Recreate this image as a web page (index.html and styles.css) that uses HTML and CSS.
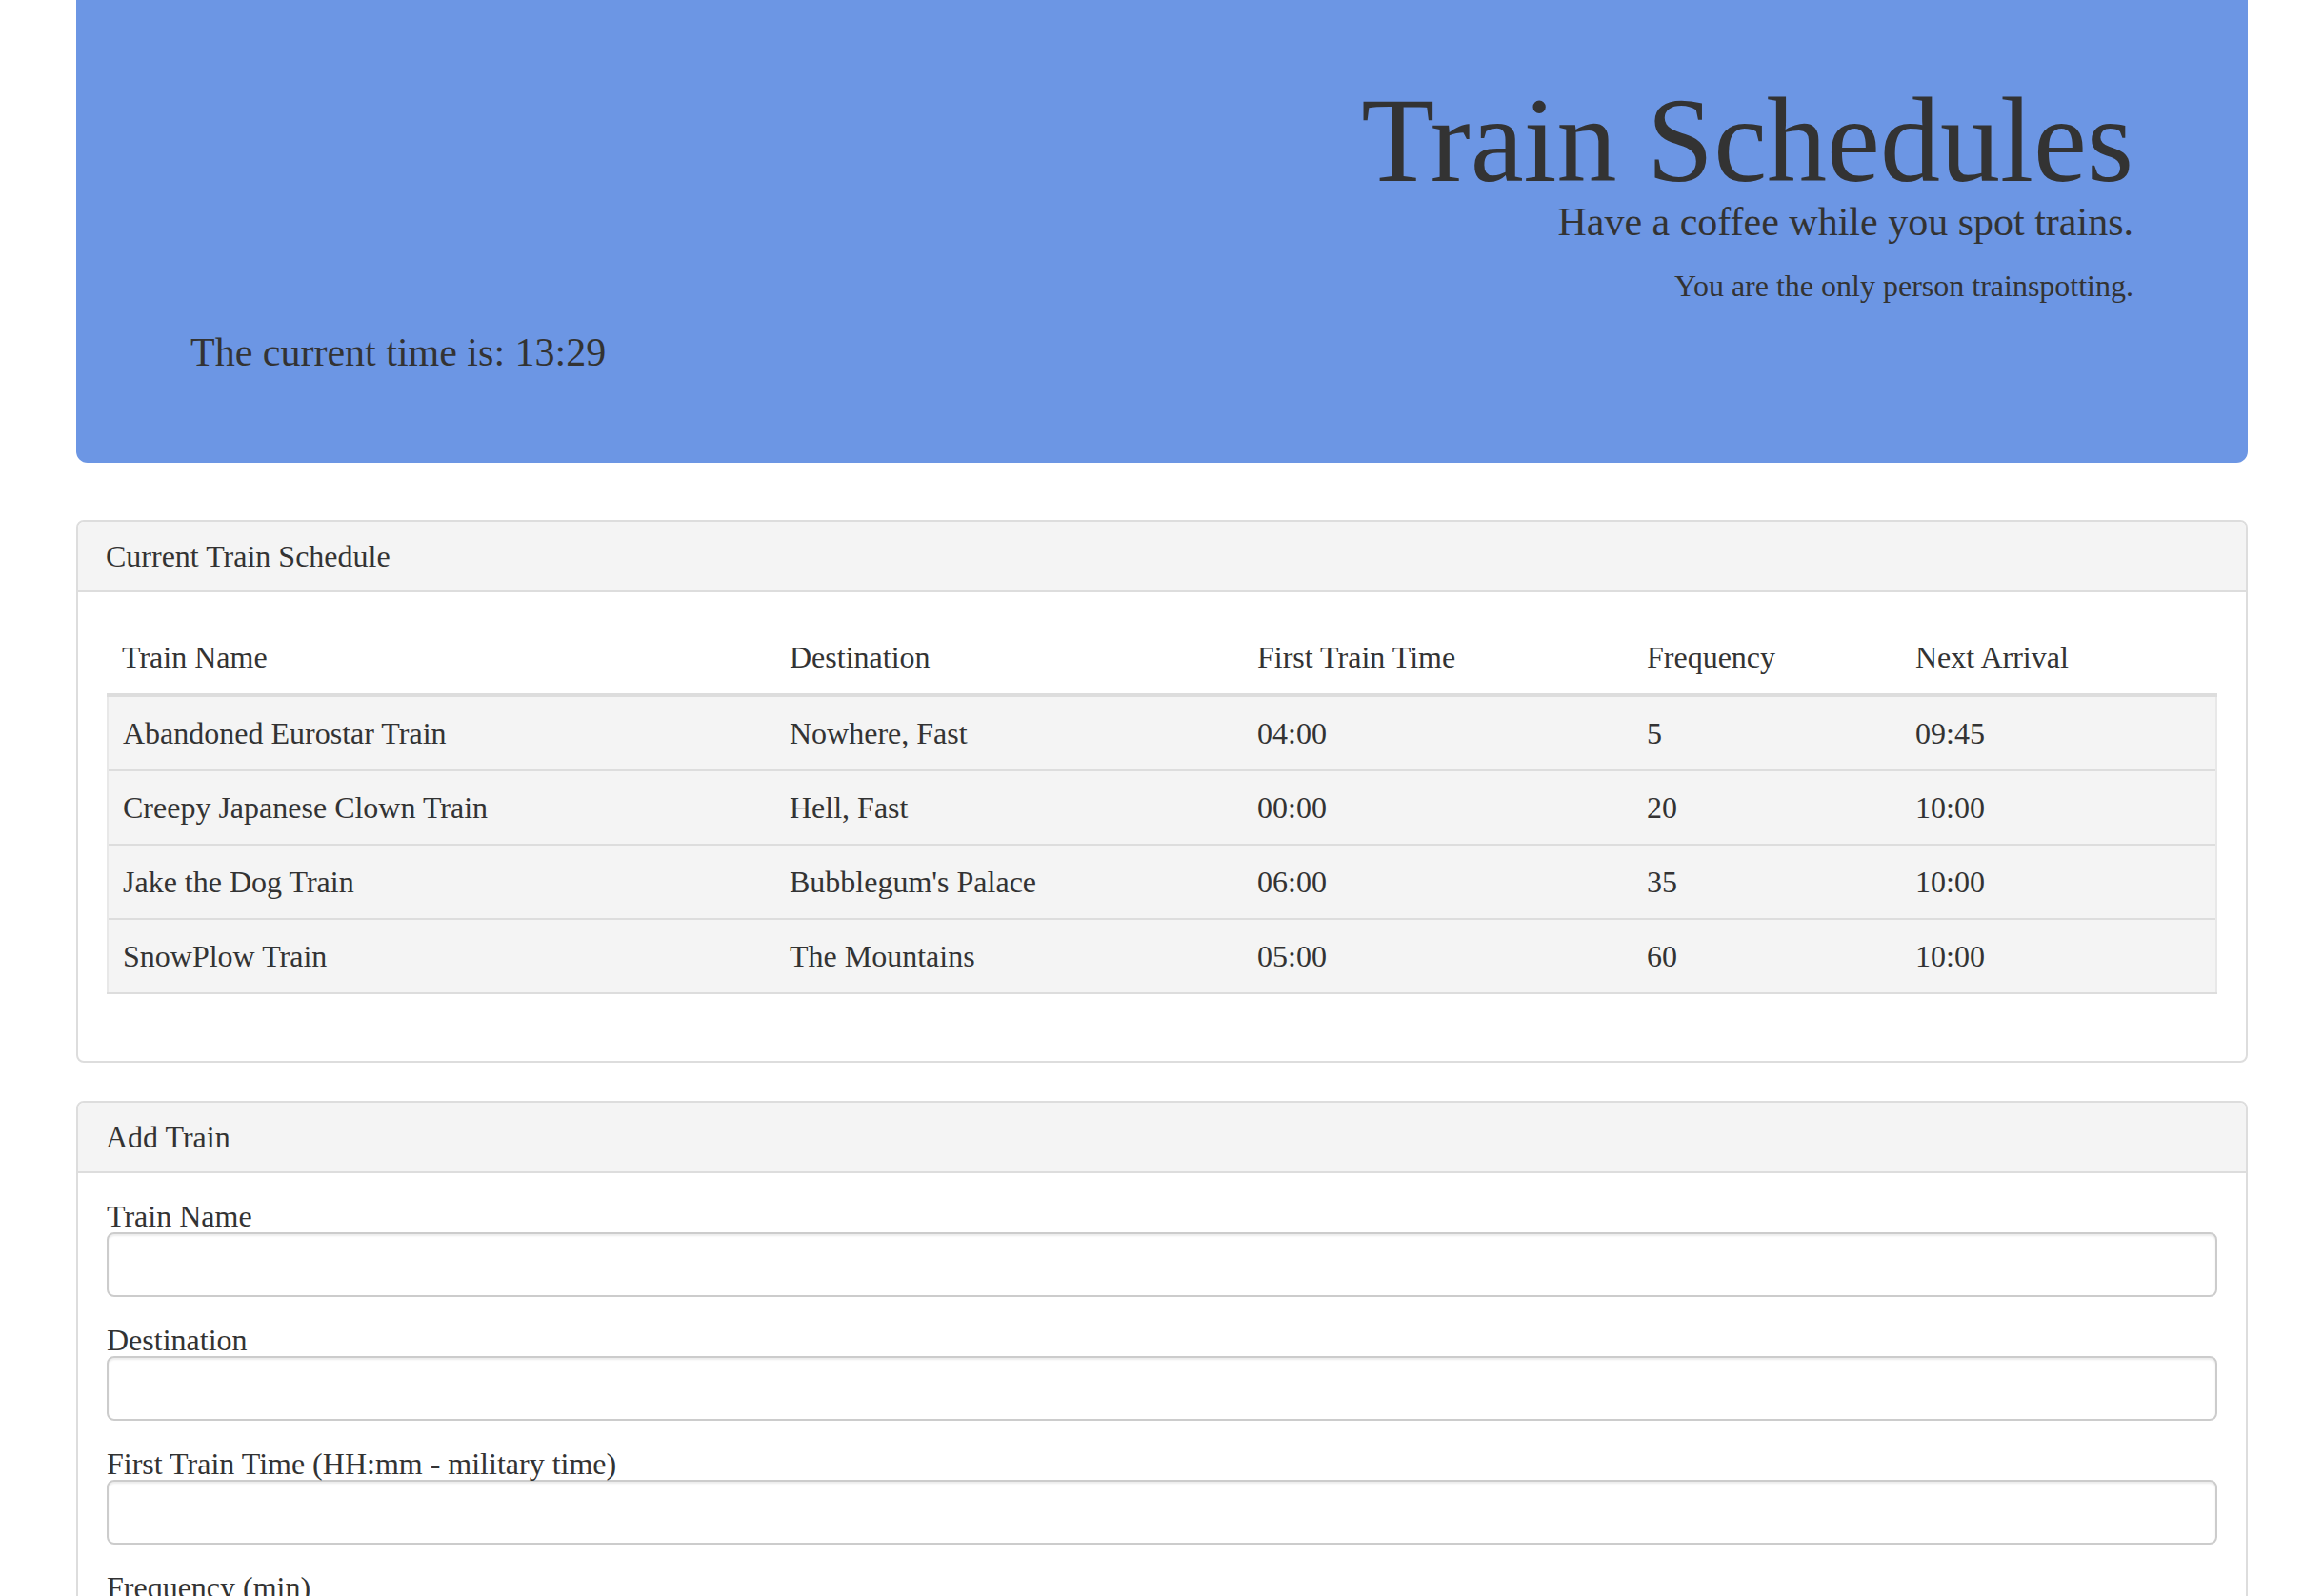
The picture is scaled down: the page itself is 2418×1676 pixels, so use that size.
FILE: index.html
```html
<!DOCTYPE html>
<html lang="en">
<head>
<meta charset="utf-8">
<title>Train Schedules</title>
<link rel="stylesheet" href="styles.css">
</head>
<body>
<div class="container">
  <header class="jumbotron">
    <h1 class="title">Train Schedules</h1>
    <p class="tagline">Have a coffee while you spot trains.</p>
    <p class="spotters">You are the only person trainspotting.</p>
    <p class="clock">The current time is: 13:29</p>
  </header>

  <section class="panel">
    <div class="panel-heading"><h3 class="panel-title">Current Train Schedule</h3></div>
    <div class="panel-body">
      <table class="schedule">
        <colgroup>
          <col class="c-name"><col class="c-dest"><col class="c-first"><col class="c-freq"><col class="c-next">
        </colgroup>
        <thead>
          <tr><th>Train Name</th><th>Destination</th><th>First Train Time</th><th>Frequency</th><th>Next Arrival</th></tr>
        </thead>
        <tbody>
          <tr><td>Abandoned Eurostar Train</td><td>Nowhere, Fast</td><td>04:00</td><td>5</td><td>09:45</td></tr>
          <tr><td>Creepy Japanese Clown Train</td><td>Hell, Fast</td><td>00:00</td><td>20</td><td>10:00</td></tr>
          <tr><td>Jake the Dog Train</td><td>Bubblegum's Palace</td><td>06:00</td><td>35</td><td>10:00</td></tr>
          <tr><td>SnowPlow Train</td><td>The Mountains</td><td>05:00</td><td>60</td><td>10:00</td></tr>
        </tbody>
      </table>
    </div>
  </section>

  <section class="panel">
    <div class="panel-heading"><h3 class="panel-title">Add Train</h3></div>
    <div class="panel-body">
      <form class="add-form">
        <div class="form-group">
          <label for="train-name">Train Name</label>
          <input id="train-name" class="form-control" type="text">
        </div>
        <div class="form-group">
          <label for="destination">Destination</label>
          <input id="destination" class="form-control" type="text">
        </div>
        <div class="form-group">
          <label for="first-time">First Train Time (HH:mm - military time)</label>
          <input id="first-time" class="form-control" type="text">
        </div>
        <div class="form-group">
          <label for="frequency">Frequency (min)</label>
          <input id="frequency" class="form-control" type="text">
        </div>
        <button type="button" class="btn">Submit</button>
      </form>
    </div>
  </section>
</div>
</body>
</html>
```

FILE: styles.css
```css
* {
  box-sizing: border-box;
}

html, body {
  margin: 0;
  padding: 0;
  background: #ffffff;
}

body {
  font-family: "Liberation Serif", "Times New Roman", Times, serif;
  font-size: 32px;
  line-height: 1.42857;
  color: #333333;
}

.container {
  width: 2280px;
  margin-left: 80px;
}

/* ---------- jumbotron ---------- */
.jumbotron {
  background: #6c96e4;
  border-radius: 0 0 12px 12px;
  padding: 85px 120px 95px;
  margin-bottom: 60px;
}

.title {
  margin: 0 0 1px;
  font-size: 126px;
  line-height: 126px;
  font-weight: normal;
  text-align: right;
}

.tagline {
  margin: 0 0 30px;
  font-size: 42px;
  line-height: 42px;
  text-align: right;
}

.spotters {
  margin: 0 0 33px;
  font-size: 32px;
  line-height: 32px;
  text-align: right;
}

.clock {
  margin: 0;
  font-size: 42px;
  line-height: 42px;
}

/* ---------- panels ---------- */
.panel {
  border: 2px solid #dddddd;
  border-radius: 8px;
  margin-bottom: 40px;
  background: #ffffff;
}

.panel-heading {
  background: #f4f4f4;
  border-bottom: 2px solid #dddddd;
  border-radius: 6px 6px 0 0;
  padding: 20px 29px;
}

.panel-title {
  margin: 0;
  font-size: 32px;
  line-height: 32px;
  font-weight: normal;
}

.panel-body {
  padding: 30px;
}

/* ---------- table ---------- */
.schedule {
  width: 100%;
  table-layout: fixed;
  border-collapse: collapse;
  margin-bottom: 40px;
}

.c-name { width: 701px; }
.c-dest { width: 491px; }
.c-first { width: 409px; }
.c-freq { width: 282px; }

.schedule th,
.schedule td {
  padding: 16px 16px 16px 15px;
  line-height: 44px;
  text-align: left;
  font-weight: normal;
  vertical-align: top;
}

.schedule th {
  border-bottom: 4px solid #dddddd;
}

.schedule td {
  background: #f4f4f4;
  border-top: 2px solid #dddddd;
}

.schedule tbody tr:first-child td {
  border-top: 4px solid #dddddd;
}

.schedule tbody tr:last-child td {
  border-bottom: 2px solid #dddddd;
}

.schedule td:first-child {
  border-left: 2px solid #e8e8e8;
}

.schedule td:last-child {
  border-right: 2px solid #e8e8e8;
}

/* ---------- form ---------- */
.form-group {
  margin-bottom: 30px;
}

.form-group label {
  display: block;
  font-size: 32px;
  line-height: 30px;
  margin-bottom: 2px;
}

.form-control {
  display: block;
  width: 100%;
  height: 68px;
  padding: 12px 24px;
  font: inherit;
  color: #555555;
  background: #ffffff;
  border: 2px solid #cccccc;
  border-radius: 8px;
  box-shadow: inset 0 2px 2px rgba(0, 0, 0, 0.075);
}

.btn {
  font: inherit;
  color: #333333;
  background: #ffffff;
  border: 2px solid #cccccc;
  border-radius: 8px;
  padding: 12px 24px;
}
```
